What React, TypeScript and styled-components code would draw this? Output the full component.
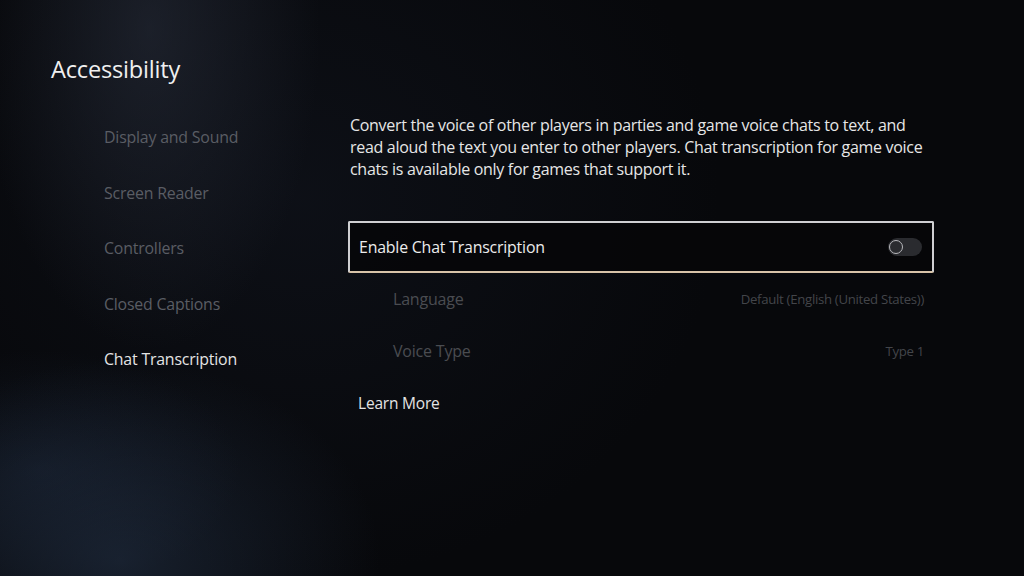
import React from 'react';
import styled, { createGlobalStyle } from 'styled-components';

const GlobalStyle = createGlobalStyle`
  html, body {
    margin: 0;
    padding: 0;
    background: #07080b;
  }
  body {
    font-family: 'Open Sans', 'Noto Sans', sans-serif;
  }
`;

const navItems = [
  'Display and Sound',
  'Screen Reader',
  'Controllers',
  'Closed Captions',
  'Chat Transcription',
];

const subRows = [
  { label: 'Language', value: 'Default (English (United States))' },
  { label: 'Voice Type', value: 'Type 1' },
];

const App: React.FC = () => {
  return (
    <>
      <GlobalStyle />
      <Screen>
        <Title>Accessibility</Title>
        <Body>
          <Nav>
            {navItems.map((item) => (
              <NavItem key={item} $active={item === 'Chat Transcription'}>
                {item}
              </NavItem>
            ))}
          </Nav>
          <Content>
            <Description>
              Convert the voice of other players in parties and game voice chats
              to text, and read aloud the text you enter to other players. Chat
              transcription for game voice chats is available only for games
              that support it.
            </Description>
            <FocusRow>
              <RowLabel>Enable Chat Transcription</RowLabel>
              <Toggle>
                <Knob />
              </Toggle>
            </FocusRow>
            {subRows.map((row) => (
              <SubRow key={row.label}>
                <SubLabel>{row.label}</SubLabel>
                <SubValue>{row.value}</SubValue>
              </SubRow>
            ))}
            <LearnMore>Learn More</LearnMore>
          </Content>
        </Body>
      </Screen>
    </>
  );
};

const Screen = styled.div`
  width: 1024px;
  height: 576px;
  overflow: hidden;
  box-sizing: border-box;
  padding: 52px 0 0 51px;
  background:
    radial-gradient(ellipse 260px 200px at 120px 560px, rgba(40, 56, 80, 0.5), transparent 100%),
    radial-gradient(ellipse 200px 120px at 40px 470px, rgba(30, 42, 62, 0.4), transparent 100%),
    radial-gradient(ellipse 170px 320px at 150px 30px, rgba(42, 48, 62, 0.55), transparent 100%),
    radial-gradient(ellipse 420px 380px at 300px 200px, rgba(18, 22, 32, 0.55), transparent 100%),
    #07080b;
  color: #e8e8e8;
`;

const Title = styled.h1`
  margin: 0;
  font-size: 23.6px;
  font-weight: 400;
  line-height: 34px;
  color: #f0f0f0;
  letter-spacing: -0.2px;
`;

const Body = styled.div`
  display: flex;
  margin-top: 23px;
`;

const Nav = styled.div`
  display: flex;
  flex-direction: column;
  gap: 33.5px;
  padding: 17px 0 0 53px;
  width: 244px;
`;

const NavItem = styled.div<{ $active?: boolean }>`
  font-size: 15.9px;
  line-height: 22px;
  letter-spacing: -0.2px;
  color: ${({ $active }) => ($active ? '#e4e4e4' : '#5a5d64')};
`;

const Content = styled.div`
  width: 586px;
  padding-top: 5px;
  display: flex;
  flex-direction: column;
`;

const Description = styled.p`
  margin: 0 0 0 2px;
  font-size: 16px;
  line-height: 22px;
  letter-spacing: -0.3px;
  color: #e6e6e6;
`;

const FocusRow = styled.div`
  margin-top: 41px;
  height: 52px;
  box-sizing: border-box;
  display: flex;
  align-items: center;
  justify-content: space-between;
  padding: 0 10px 0 9px;
  border: 2px solid #cfcfd2;
  border-bottom-color: #d8c3a8;
  border-radius: 2px;
  background: rgba(6, 6, 8, 0.85);
`;

const RowLabel = styled.span`
  font-size: 15.9px;
  letter-spacing: -0.2px;
  color: #ececec;
`;

const Toggle = styled.div`
  width: 33px;
  height: 18px;
  border-radius: 9px;
  background: #2a2b2f;
  display: flex;
  align-items: center;
  padding-left: 1px;
`;

const Knob = styled.div`
  width: 12px;
  height: 12px;
  border-radius: 50%;
  border: 1.5px solid #b8b8bc;
`;

const SubRow = styled.div`
  height: 52px;
  display: flex;
  align-items: center;
  justify-content: space-between;
  padding: 0 10px 0 45px;
`;

const SubLabel = styled.span`
  font-size: 16px;
  letter-spacing: -0.2px;
  color: #4a4c51;
`;

const SubValue = styled.span`
  font-size: 13.2px;
  letter-spacing: -0.3px;
  color: #43454a;
`;

const LearnMore = styled.div`
  padding-left: 10px;
  line-height: 52px;
  font-size: 15.5px;
  letter-spacing: -0.2px;
  color: #e4e4e4;
`;

export default App;
